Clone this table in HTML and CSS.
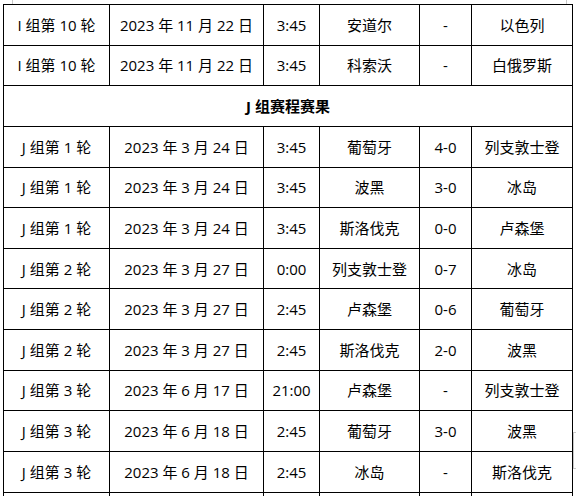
FILE: index.html
```html
<!DOCTYPE html>
<html lang="zh-CN">
<head>
<meta charset="utf-8">
<title>赛程赛果</title>
<link rel="stylesheet" href="styles.css">
</head>
<body>
<div class="page">
  <span class="mark mark-tl"></span>
  <span class="mark mark-tr"></span>
  <span class="mark mark-br"></span>
  <table class="sched">
    <colgroup>
      <col class="c1"><col class="c2"><col class="c3"><col class="c4"><col class="c5"><col class="c6">
    </colgroup>
    <tbody>
      <tr><td>I 组第 10 轮</td><td>2023 年 11 月 22 日</td><td>3:45</td><td>安道尔</td><td>-</td><td>以色列</td></tr>
      <tr><td>I 组第 10 轮</td><td>2023 年 11 月 22 日</td><td>3:45</td><td>科索沃</td><td>-</td><td>白俄罗斯</td></tr>
      <tr><td class="head" colspan="6">J 组赛程赛果</td></tr>
      <tr><td>J 组第 1 轮</td><td>2023 年 3 月 24 日</td><td>3:45</td><td>葡萄牙</td><td>4-0</td><td>列支敦士登</td></tr>
      <tr><td>J 组第 1 轮</td><td>2023 年 3 月 24 日</td><td>3:45</td><td>波黑</td><td>3-0</td><td>冰岛</td></tr>
      <tr><td>J 组第 1 轮</td><td>2023 年 3 月 24 日</td><td>3:45</td><td>斯洛伐克</td><td>0-0</td><td>卢森堡</td></tr>
      <tr><td>J 组第 2 轮</td><td>2023 年 3 月 27 日</td><td>0:00</td><td>列支敦士登</td><td>0-7</td><td>冰岛</td></tr>
      <tr><td>J 组第 2 轮</td><td>2023 年 3 月 27 日</td><td>2:45</td><td>卢森堡</td><td>0-6</td><td>葡萄牙</td></tr>
      <tr><td>J 组第 2 轮</td><td>2023 年 3 月 27 日</td><td>2:45</td><td>斯洛伐克</td><td>2-0</td><td>波黑</td></tr>
      <tr><td>J 组第 3 轮</td><td>2023 年 6 月 17 日</td><td>21:00</td><td>卢森堡</td><td>-</td><td>列支敦士登</td></tr>
      <tr><td>J 组第 3 轮</td><td>2023 年 6 月 18 日</td><td>2:45</td><td>葡萄牙</td><td>3-0</td><td>波黑</td></tr>
      <tr><td>J 组第 3 轮</td><td>2023 年 6 月 18 日</td><td>2:45</td><td>冰岛</td><td>-</td><td>斯洛伐克</td></tr>
      <tr><td></td><td></td><td></td><td></td><td></td><td></td></tr>
    </tbody>
  </table>
</div>
</body>
</html>
```
FILE: styles.css
```css
html, body {
  margin: 0;
  padding: 0;
  background: #fff;
  overflow: hidden;
}
.page {
  position: relative;
  width: 576px;
  height: 496px;
  overflow: hidden;
  padding: 4px 0 0 3px;
  box-sizing: border-box;
}
.sched {
  border-collapse: collapse;
  table-layout: fixed;
  width: 569px;
  font-family: "Open Sans", "Noto Sans CJK SC", sans-serif;
  font-size: 15px;
  color: #000;
}
.c1 { width: 106px; }
.c2 { width: 154px; }
.c3 { width: 56px; }
.c4 { width: 100px; }
.c5 { width: 52px; }
.c6 { width: 101px; }
.sched tr {
  height: 40.64px;
}
.sched td {
  border: 1px solid #000;
  padding: 0;
  text-align: center;
  vertical-align: middle;
  white-space: nowrap;
  line-height: 18px;
}
.sched td.head {
  font-weight: bold;
}
.mark {
  position: absolute;
  border-color: #c8c8c8;
  border-style: solid;
  border-width: 0;
}
.mark-tl {
  left: 12px;
  top: 0;
  width: 0;
  height: 4px;
  border-left-width: 1px;
}
.mark-tr {
  left: 566px;
  top: 0;
  width: 0;
  height: 4px;
  border-left-width: 1px;
}
.mark-br {
  left: 573px;
  top: 432px;
  width: 4px;
  height: 35px;
  border-left-width: 1px;
  border-top-width: 1px;
  border-bottom-width: 1px;
}
```
